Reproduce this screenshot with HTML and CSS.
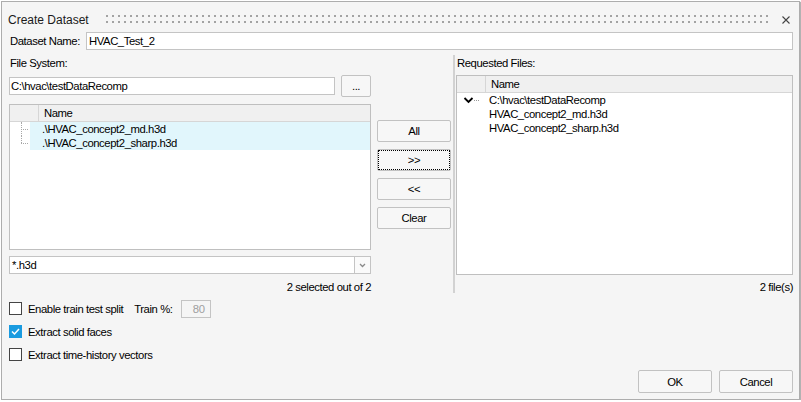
FILE: index.html
```html
<!DOCTYPE html>
<html lang="en">
<head>
  <meta charset="UTF-8" />
  <title>Create Dataset</title>
  <link rel="stylesheet" href="styles.css">
</head>
<body>
  <div class="dialog">
    <div class="titlebar">
      <span class="title">Create Dataset</span>
      <span class="grip"></span>
      <svg class="close" width="10" height="10" viewBox="0 0 10 10">
        <path d="M1.5 1.5 L8.5 8.5 M8.5 1.5 L1.5 8.5" stroke="#444" stroke-width="1.1" fill="none"/>
      </svg>
    </div>

    <div class="name-row">
      <label class="name-label">Dataset Name:</label>
      <div class="field name-field">HVAC_Test_2</div>
    </div>

    <div class="main">
      <div class="left-pane">
        <div class="pane-label">File System:</div>
        <div class="path-row">
          <div class="field path-field">C:\hvac\testDataRecomp</div>
          <button class="btn browse">...</button>
        </div>
        <div class="pane-body">
          <div class="file-col">
            <div class="tree left-tree">
              <div class="tree-head"><span class="head-gap"></span><span class="head-name">Name</span></div>
              <div class="tree-row">
                <span class="branch"></span>
                <span class="row-text selected">.\HVAC_concept2_md.h3d</span>
              </div>
              <div class="tree-row">
                <span class="branch last"></span>
                <span class="row-text selected">.\HVAC_concept2_sharp.h3d</span>
              </div>
            </div>
            <div class="combo">
              <div class="combo-text">*.h3d</div>
              <div class="combo-btn">
                <svg width="7" height="5" viewBox="0 0 7 5"><path d="M1 1 L3.5 3.5 L6 1" stroke="#8a8a8a" stroke-width="1.3" fill="none"/></svg>
              </div>
            </div>
            <div class="status">2 selected out of 2</div>
          </div>
          <div class="move-buttons">
            <button class="btn">All</button>
            <button class="btn focused">&gt;&gt;</button>
            <button class="btn">&lt;&lt;</button>
            <button class="btn">Clear</button>
          </div>
        </div>
      </div>

      <div class="splitter"></div>

      <div class="right-pane">
        <div class="pane-label">Requested Files:</div>
        <div class="tree right-tree">
          <div class="tree-head"><span class="head-gap"></span><span class="head-name">Name</span></div>
          <div class="tree-row">
            <span class="toggle">
              <svg width="32" height="14" viewBox="0 0 32 14">
                <path d="M7.5 5 L11.5 9 L15.5 5" stroke="#000" stroke-width="1.8" fill="none"/>
                <path d="M17 7.5 H22" stroke="#9a9a9a" stroke-width="1" stroke-dasharray="1 1" fill="none"/>
              </svg>
            </span>
            <span class="row-text">C:\hvac\testDataRecomp</span>
          </div>
          <div class="tree-row child"><span class="row-text">HVAC_concept2_md.h3d</span></div>
          <div class="tree-row child"><span class="row-text">HVAC_concept2_sharp.h3d</span></div>
        </div>
        <div class="status">2 file(s)</div>
      </div>
    </div>

    <div class="options">
      <div class="option">
        <span class="check"></span>
        <span class="option-text">Enable train test split</span>
        <span class="train-label">Train %:</span>
        <div class="field train-field">80</div>
      </div>
      <div class="option">
        <span class="check checked">
          <svg width="13" height="13" viewBox="0 0 13 13"><path d="M3 6.5 L5.5 9 L10 4" stroke="#fff" stroke-width="1.5" fill="none"/></svg>
        </span>
        <span class="option-text">Extract solid faces</span>
      </div>
      <div class="option">
        <span class="check"></span>
        <span class="option-text">Extract time-history vectors</span>
      </div>
    </div>

    <div class="footer">
      <button class="btn footer-btn">OK</button>
      <button class="btn footer-btn">Cancel</button>
    </div>
  </div>
</body>
</html>
```

FILE: styles.css
```css
* {
  box-sizing: border-box;
}

body {
  margin: 0;
  background-color: #fff;
  font-family: "Liberation Sans", Arial, sans-serif;
  font-size: 11.3px;
  letter-spacing: -0.42px;
  color: #000;
}

.dialog {
  margin: 1px 0 0 1px;
  width: 799px;
  height: 399px;
  border: 1px solid #adadad;
  background-color: #f5f5f5;
  box-shadow: 1px 1px 1px rgba(0, 0, 0, 0.3);
  padding: 0 6px 0 7px;
  display: flex;
  flex-direction: column;
}

/* title bar */
.titlebar {
  display: flex;
  align-items: flex-start;
  height: 29px;
  margin: 0 -6px 0 -7px;
  padding: 11px 8px 0 6px;
}

.title {
  font-size: 12px;
  line-height: 14px;
  letter-spacing: 0;
  color: #1a1a1a;
}

.grip {
  flex: 1;
  height: 12px;
  margin: 0 9px 0 15px;
  background: radial-gradient(circle, #a3a3a3 0.9px, transparent 1.2px) 0 0 / 6px 6px;
}

.close {
  margin-top: 2px;
}

/* fields */
.field {
  height: 18px;
  background-color: #fff;
  border: 1px solid #c4c4c4;
  padding: 1px 0 0 2px;
  line-height: 15px;
  white-space: nowrap;
}

.name-row {
  display: flex;
  height: 18px;
  margin-top: 1px;
}

.name-label {
  flex: 0 0 77px;
  padding: 2px 0 0 1px;
  line-height: 15px;
}

.name-field {
  flex: 1;
}

.btn {
  font: inherit;
  letter-spacing: inherit;
  color: #000;
  background-color: #f7f7f7;
  border: 1px solid #c2c2c2;
  border-radius: 2px;
  padding: 0;
  height: 22px;
}

.btn.focused {
  outline: 1px dotted #000;
  outline-offset: -2px;
}

/* main area */
.main {
  display: flex;
  height: 240px;
  margin-top: 5px;
}

.left-pane {
  width: 442px;
  display: flex;
  flex-direction: column;
}

.pane-label {
  height: 17px;
  line-height: 17px;
  padding-left: 1px;
}

.path-row {
  display: flex;
  align-items: center;
  gap: 6px;
  width: 362px;
  height: 22px;
  margin-top: 3px;
}

.path-field {
  width: 326px;
  padding-left: 1px;
}

.browse {
  width: 30px;
}

.pane-body {
  display: flex;
  margin-top: 7px;
}

.file-col {
  width: 362px;
  display: flex;
  flex-direction: column;
}

.tree {
  background-color: #fff;
  border: 1px solid #bfbfbf;
}

.left-tree {
  height: 146px;
}

.right-tree {
  height: 200px;
  margin-top: 3px;
}

.tree-head {
  display: flex;
  height: 17px;
  background-color: #f0f0f0;
  border-bottom: 1px solid #d6d6d6;
}

.head-gap {
  width: 29px;
  border-right: 1px solid #d6d6d6;
}

.head-name {
  padding-left: 5px;
  line-height: 16px;
}

.tree-row {
  display: flex;
  height: 14px;
  line-height: 14px;
  white-space: nowrap;
}

.branch {
  position: relative;
  width: 20px;
}

.branch::before {
  content: "";
  position: absolute;
  left: 11px;
  top: 0;
  bottom: 0;
  border-left: 1px dotted #a8a8a8;
}

.branch.last::before {
  bottom: 7px;
}

.branch::after {
  content: "";
  position: absolute;
  left: 11px;
  top: 7px;
  width: 7px;
  border-top: 1px dotted #a8a8a8;
}

.row-text {
  flex: 1;
}

.left-tree .row-text {
  padding-left: 12px;
}

.row-text.selected {
  background-color: #e1f6fc;
}

.toggle {
  width: 32px;
  height: 14px;
}

.toggle svg {
  display: block;
}

.tree-row.child {
  padding-left: 32px;
}

.combo {
  display: flex;
  height: 18px;
  margin-top: 6px;
}

.combo-text {
  flex: 1;
  background-color: #fff;
  border: 1px solid #c4c4c4;
  padding: 1px 0 0 2px;
  line-height: 15px;
}

.combo-btn {
  width: 16px;
  border: 1px solid #c4c4c4;
  border-left: none;
  background-color: #fafafa;
  display: flex;
  align-items: center;
  justify-content: center;
}

.status {
  height: 15px;
  line-height: 15px;
  margin-top: 6px;
  text-align: right;
}

.right-pane .status {
  margin-top: 5px;
}

.move-buttons {
  display: flex;
  flex-direction: column;
  gap: 7px;
  width: 74px;
  margin-left: 6px;
  padding-top: 16px;
}

.splitter {
  width: 2px;
  height: 238px;
  margin-left: 2px;
  background-color: #d2d2d2;
}

.right-pane {
  width: 337px;
  margin-left: 1px;
  display: flex;
  flex-direction: column;
}

.right-pane .pane-label {
  padding-left: 1px;
}

/* options */
.options {
  margin-top: 2px;
}

.option {
  display: flex;
  align-items: center;
  height: 23px;
}

.check {
  width: 13px;
  height: 13px;
  border: 1px solid #444;
  background-color: #fff;
}

.check.checked {
  border-color: #1a9be0;
  background-color: #1a9be0;
}

.check.checked svg {
  display: block;
  margin: -1px;
}

.option-text {
  margin-left: 6px;
}

.train-label {
  margin-left: 11px;
}

.train-field {
  width: 30px;
  margin-left: 8px;
  padding: 1px 5px 0 0;
  text-align: right;
  color: #a0a0a0;
  background-color: #f5f5f5;
}

.footer {
  display: flex;
  justify-content: flex-end;
  gap: 7px;
  margin-top: 4px;
}

.footer-btn {
  width: 74px;
  height: 23px;
}
```
